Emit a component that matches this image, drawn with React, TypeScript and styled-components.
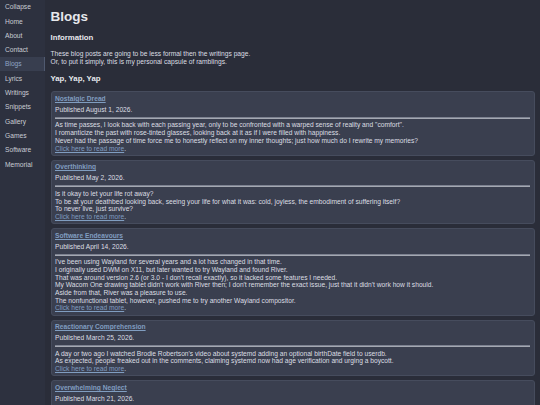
import React from 'react'
import styled, { createGlobalStyle } from 'styled-components'

const GlobalStyle = createGlobalStyle`
	html, body {
		margin: 0;
		padding: 0;
		background: #2a2d39;
	}
	body {
		font-family: 'Liberation Sans', Arial, sans-serif;
		font-size: 6.67px;
		color: #dcdee3;
	}
`

interface Post {
	title: string
	date: string
	lines: string[]
}

const posts: Post[] = [
	{
		title: 'Nostalgic Dread',
		date: 'August 1, 2026',
		lines: [
			'As time passes, I look back with each passing year, only to be confronted with a warped sense of reality and "comfort".',
			'I romanticize the past with rose-tinted glasses, looking back at it as if I were filled with happiness.',
			'Never had the passage of time force me to honestly reflect on my inner thoughts; just how much do I rewrite my memories?',
		],
	},
	{
		title: 'Overthinking',
		date: 'May 2, 2026',
		lines: [
			'Is it okay to let your life rot away?',
			'To be at your deathbed looking back, seeing your life for what it was: cold, joyless, the embodiment of suffering itself?',
			'To never live, just survive?',
		],
	},
	{
		title: 'Software Endeavours',
		date: 'April 14, 2026',
		lines: [
			"I've been using Wayland for several years and a lot has changed in that time.",
			'I originally used DWM on X11, but later wanted to try Wayland and found River.',
			"That was around version 2.6 (or 3.0 - I don't recall exactly), so it lacked some features I needed.",
			"My Wacom One drawing tablet didn't work with River then; I don't remember the exact issue, just that it didn't work how it should.",
			'Aside from that, River was a pleasure to use.',
			'The nonfunctional tablet, however, pushed me to try another Wayland compositor.',
		],
	},
	{
		title: 'Reactionary Comprehension',
		date: 'March 25, 2026',
		lines: [
			"A day or two ago I watched Brodie Robertson's video about systemd adding an optional birthDate field to userdb.",
			'As expected, people freaked out in the comments, claiming systemd now had age verification and urging a boycott.',
		],
	},
	{
		title: 'Overwhelming Neglect',
		date: 'March 21, 2026',
		lines: ['...'],
	},
]

const navItems = ['Collapse', 'Home', 'About', 'Contact', 'Blogs', 'Lyrics', 'Writings', 'Snippets', 'Gallery', 'Games', 'Software', 'Memorial']

const Layout = styled.div`
	display: flex;
	min-height: 100vh;
	height: 405px;
	overflow: hidden;
`

const Sidebar = styled.nav`
	width: 45px;
	flex: 0 0 45px;
	background: #2d313f;
	display: flex;
	flex-direction: column;
`

const NavItem = styled.a<{ $active?: boolean }>`
	display: block;
	padding: 3.3px 0 3.3px 5px;
	line-height: 7.7px;
	color: ${(p) => (p.$active ? '#8ea4c4' : '#c9ccd4')};
	background: ${(p) => (p.$active ? '#383e4f' : 'transparent')};
	box-shadow: ${(p) => (p.$active ? 'inset -1px 0 0 #505a70' : 'none')};
	text-decoration: none;
	cursor: pointer;
`

const Main = styled.main`
	flex: 1;
	padding: 0 5.5px 0 5.5px;
`

const Title = styled.h1`
	font-size: 13.5px;
	line-height: 15.5px;
	margin: 9px 0 8.8px;
	color: #e6e8ec;
`

const Heading = styled.h3`
	font-size: 7.8px;
	line-height: 9px;
	margin: 0;
	color: #e6e8ec;
`

const Intro = styled.p`
	margin: 7.5px 0 8.5px;
	line-height: 8px;
`

const PostList = styled.div`
	display: flex;
	flex-direction: column;
	gap: 4px;
	margin-top: 8.2px;
`

const Card = styled.article`
	background: #3a3f4f;
	border: 1px solid #464c5d;
	border-radius: 3px;
	padding: 2.6px 3.5px 2.6px 3.5px;
	line-height: 7.7px;
`

const PostLink = styled.a`
	color: #809dc0;
	font-weight: bold;
	text-decoration: underline;
`

const Published = styled.div`
	margin-top: 3.3px;
`

const Rule = styled.hr`
	margin: 3.3px 0 2.4px;
	border: 0;
	border-top: 1px solid #7c8190;
	border-bottom: 1px solid #a4a8b2;
	height: 0;
`

const ReadMore = styled.a`
	color: #809dc0;
	text-decoration: underline;
`

const App: React.FC = () => {
	return (
		<>
			<GlobalStyle />
			<Layout>
				<Sidebar>
					{navItems.map((item) => (
						<NavItem key={item} $active={item === 'Blogs'}>
							{item}
						</NavItem>
					))}
				</Sidebar>
				<Main>
					<Title>Blogs</Title>
					<Heading>Information</Heading>
					<Intro>
						These blog posts are going to be less formal then the writings page.
						<br />
						Or, to put it simply, this is my personal capsule of ramblings.
					</Intro>
					<Heading>Yap, Yap, Yap</Heading>
					<PostList>
						{posts.map((post) => (
							<Card key={post.title}>
								<PostLink>{post.title}</PostLink>
								<Published>Published {post.date}.</Published>
								<Rule />
								{post.lines.map((line, i) => (
									<div key={i}>{line}</div>
								))}
								<div>
									<ReadMore>Click here to read more</ReadMore>.
								</div>
							</Card>
						))}
					</PostList>
				</Main>
			</Layout>
		</>
	)
}

export default App
